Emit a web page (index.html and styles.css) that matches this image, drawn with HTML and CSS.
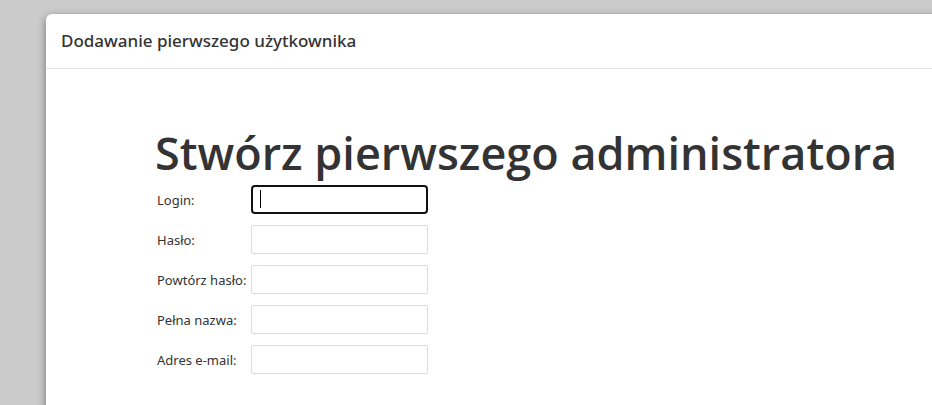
FILE: index.html
```html
<!DOCTYPE html>
<html lang="pl">
<head>
<meta charset="utf-8">
<title>Dodawanie pierwszego użytkownika</title>
<link rel="stylesheet" href="styles.css">
</head>
<body>
<div class="modal">
  <div class="modal-header">
    <h4 class="modal-title">Dodawanie pierwszego użytkownika</h4>
  </div>
  <div class="modal-body">
    <h1 class="headline">Stwórz pierwszego administratora</h1>
    <form class="form">
      <div class="row">
        <label class="label" for="login">Login:</label>
        <span class="field-wrap"><input class="field focused" id="login" type="text"><span class="caret"></span></span>
      </div>
      <div class="row">
        <label class="label" for="pass">Hasło:</label>
        <span class="field-wrap"><input class="field" id="pass" type="password"></span>
      </div>
      <div class="row">
        <label class="label" for="pass2">Powtórz hasło:</label>
        <span class="field-wrap"><input class="field" id="pass2" type="password"></span>
      </div>
      <div class="row">
        <label class="label" for="name">Pełna nazwa:</label>
        <span class="field-wrap"><input class="field" id="name" type="text"></span>
      </div>
      <div class="row">
        <label class="label" for="mail">Adres e-mail:</label>
        <span class="field-wrap"><input class="field" id="mail" type="text"></span>
      </div>
    </form>
  </div>
</div>
</body>
</html>
```
FILE: styles.css
```css
html, body {
  margin: 0;
  padding: 0;
  height: 100%;
  overflow: hidden;
}
body {
  background: #cbcbcb;
  font-family: "Noto Sans", "Open Sans", sans-serif;
  color: #333;
}
.modal {
  margin: 14px 0 0 46px;
  width: 920px;
  height: 420px;
  background: #fff;
  border-radius: 6px 0 0 0;
  box-shadow: 0 3px 9px rgba(0, 0, 0, 0.45);
}
.modal-header {
  padding: 15px;
  border-bottom: 1px solid #e5e5e5;
}
.modal-title {
  margin: 0;
  font-size: 17px;
  font-weight: 500;
  line-height: 24px;
  color: #333;
}
.modal-body {
  padding: 54px 0 0 109px;
}
.headline {
  margin: 0;
  font-family: "Open Sans", "Noto Sans", sans-serif;
  font-size: 45px;
  font-weight: 600;
  line-height: 60px;
  color: #333;
  white-space: nowrap;
}
.form {
  margin-top: 2px;
  display: flex;
  flex-direction: column;
  gap: 11px;
  padding-left: 2px;
}
.row {
  display: flex;
  align-items: center;
}
.label {
  width: 94px;
  font-size: 13px;
  color: #333;
  white-space: nowrap;
}
.field-wrap {
  position: relative;
  display: block;
}
.field {
  display: block;
  box-sizing: border-box;
  width: 177px;
  height: 29px;
  margin: 0;
  border: 1px solid #dcdcdc;
  border-radius: 2px;
  background: #fff;
  outline: none;
}
.field.focused {
  border: 2px solid #111;
  border-radius: 4px;
}
.caret {
  position: absolute;
  left: 9px;
  top: 5px;
  width: 1px;
  height: 18px;
  background: #000;
}
```
